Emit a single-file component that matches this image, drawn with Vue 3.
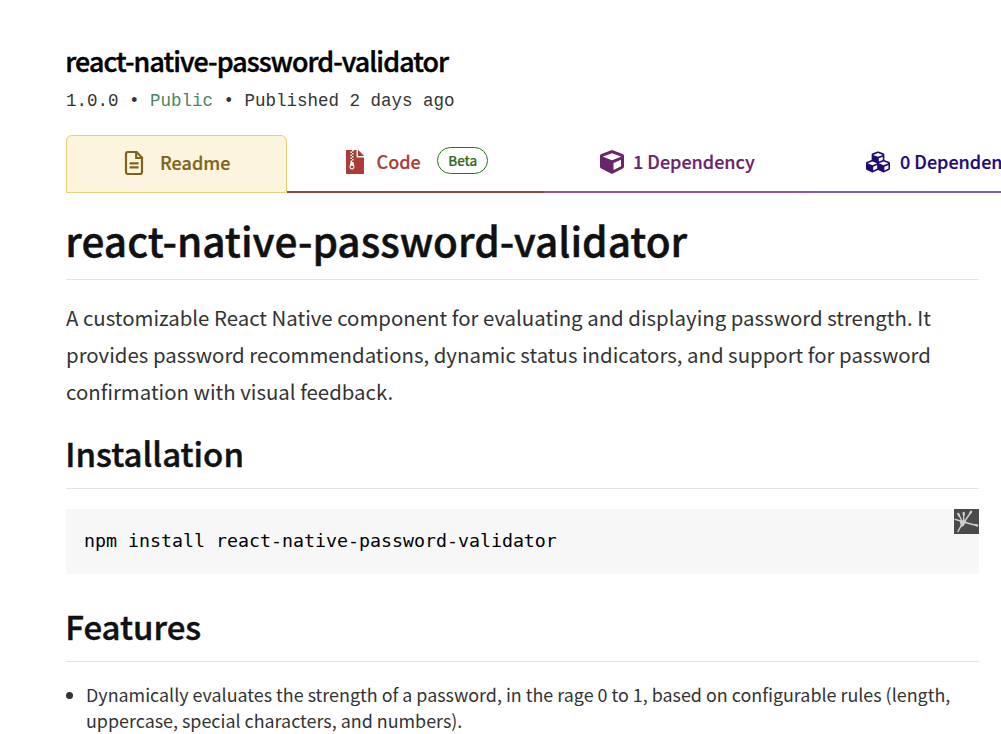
<script setup>
const features = [
  'Dynamically evaluates the strength of a password, in the rage 0 to 1, based on configurable rules (length, uppercase, special characters, and numbers).',
]
</script>

<template>
  <main class="page">
    <header>
      <h2 class="name">react-native-password-validator</h2>
      <p class="meta">1.0.0 • <span class="public">Public</span> • Published 2 days ago</p>
    </header>

    <nav class="tabs">
      <a class="tab readme">
        <svg class="doc" width="20" height="26" viewBox="0 0 20 26" fill="none" stroke="currentColor" stroke-width="2.200">
          <path d="M4 2h8.600L18 7.600V22a2 2 0 0 1-2 2H4a2 2 0 0 1-2-2V4a2 2 0 0 1 2-2z" />
          <path d="M12.200 2.400V8H17.600M5.600 13.300h9M5.600 17.400h9" />
        </svg>
        <span>Readme</span>
      </a>
      <a class="tab code">
        <svg width="18" height="24" viewBox="0 0 384 512" fill="currentColor">
          <path d="M384 121V128H256V0h6.100zM128.400 336c-17.900 0-32.400 12.100-32.400 27 0 15 14.600 27 32.500 27s32.400-12.100 32.400-27-14.600-27-32.500-27zM224 136V0h-63.600v32h-32V0H12C5 0 0 5 0 12v488c0 7 5 12 12 12h360c7 0 12-5 12-12V160H248c-13.200 0-24-10.800-24-24zM95.900 32h32v32h-32zm32.300 384c-33.200 0-58-30.400-51.400-62.900L96.400 256v-32h32v-32h-32v-32h32v-32h-32V96h32V64h32v32h-32v32h32v32h-32v32h32v32h-32v32h22.100c5.700 0 10.700 4.100 11.800 9.700l17.300 87.700c6.400 32.400-18.400 62.600-51.400 62.600z" />
        </svg>
        <span>Code</span>
        <span class="beta">Beta</span>
      </a>
      <a class="tab dependency">
        <svg width="24" height="24" viewBox="0 0 512 512" fill="currentColor">
          <path d="M239.100 6.300l-208 78c-18.700 7-31.100 25-31.100 45v225.100c0 18.200 10.300 34.800 26.500 42.900l208 104c13.500 6.800 29.400 6.800 42.900 0l208-104c16.300-8.100 26.500-24.800 26.500-42.900V129.300c0-20-12.400-37.900-31.100-44.900l-208-78C262 2.200 250 2.200 239.100 6.300zM256 68.400l192 72v1.100l-192 78-192-78v-1.100l192-72zm32 356V275.500l160-65v133.900l-160 80z" />
        </svg>
        <span>1 Dependency</span>
      </a>
      <a class="tab dependents">
        <svg width="24" height="24" viewBox="0 0 512 512" fill="currentColor">
          <path d="M488.600 250.200L392 214V105.500c0-15-9.300-28.400-23.400-33.700l-100-37.500c-8.100-3.100-17.100-3.100-25.300 0l-100 37.500c-14.100 5.300-23.400 18.700-23.400 33.700V214l-96.600 36.200C9.300 255.500 0 268.900 0 283.900V394c0 13.600 7.700 26.100 19.900 32.200l100 50c10.100 5.100 22.100 5.100 32.200 0l103.900-52 103.900 52c10.100 5.100 22.100 5.100 32.200 0l100-50c12.200-6.100 19.900-18.600 19.900-32.200V283.900c0-15-9.300-28.400-23.400-33.700zM358 214.800l-85 31.900v-68.200l85-37v73.300zM154 104.100l102-38.200 102 38.200v.6l-102 41.400-102-41.400v-.6zm84 291.100l-85 42.500v-79.100l85-38.800v75.400zm0-112l-102 41.400-102-41.400v-.6l102-38.200 102 38.200v.6zm240 112l-85 42.500v-79.100l85-38.800v75.400zm0-112l-102 41.400-102-41.400v-.6l102-38.200 102 38.200v.6z" />
        </svg>
        <span>0 Dependents</span>
      </a>
    </nav>

    <article class="content">
      <h1>react-native-password-validator</h1>
      <p class="intro">
        A customizable React Native component for evaluating and displaying password strength. It
        provides password recommendations, dynamic status indicators, and support for password
        confirmation with visual feedback.
      </p>
      <h2 class="section">Installation</h2>
      <div class="snippet">
        <code>npm install react-native-password-validator</code>
        <span class="badge">
          <svg width="25" height="25" viewBox="0 0 25 25" fill="none" stroke="#cfcfcf" stroke-linecap="round">
            <path d="M8.500 13L4.500 5.200M9.500 12.500L9.800 4M10.500 12.500L17 3M8.500 12.500L1 10.300" stroke-width="1.400" />
            <path d="M4.200 4.800l1 1.900M9.700 3.800v1.800M17.200 2.700l-1 1.500M22 16l1.200.5" stroke-width="2.200" />
            <path d="M10 13.200l13 3.300M8.500 14L4 22.500" stroke-width="1.500" />
            <path d="M5.500 11.500l7 .5-2.500 4.200-2.700 2.300z" fill="#cfcfcf" stroke="none" />
          </svg>
        </span>
      </div>
      <h2 class="section features">Features</h2>
      <ul>
        <li v-for="feature in features" :key="feature">{{ feature }}</li>
      </ul>
    </article>
  </main>
</template>

<style>
html,
body {
  margin: 0;
  background: #fff;
  overflow: hidden;
}
</style>

<style scoped>
.page {
  box-sizing: border-box;
  height: 734px;
  overflow: hidden;
  padding: 43px 22px 0 66px;
  font-family: "Noto Sans CJK SC", "Noto Sans", sans-serif;
  color: #333;
}
h1,
h2,
p,
ul {
  margin: 0;
  font-weight: 500;
}
h1,
h2 {
  text-indent: -0.7px;
  -webkit-text-stroke: 0.45px currentColor;
}
.name {
  font-size: 26.8px;
  line-height: 36px;
  letter-spacing: -0.9px;
  color: #000;
}
.meta {
  margin-top: 10px;
  font: 17.5px/24px "Liberation Mono", monospace;
  white-space: nowrap;
}
.public {
  color: #4c8569;
}
.tabs {
  display: flex;
  width: 1090px;
  height: 58px;
  margin-top: 22px;
}
.tab {
  display: flex;
  flex: none;
  align-items: center;
  box-sizing: border-box;
  height: 58px;
  font-size: 18px;
  line-height: 26px;
  font-weight: 500;
  white-space: nowrap;
  -webkit-text-stroke: 0.2px currentColor;
}
.tab svg {
  flex: none;
  -webkit-text-stroke: 0;
}
.tab span {
  margin-top: -2px;
}
.readme {
  width: 221px;
  padding: 0 0 2px 57px;
  gap: 16px;
  color: #7f6420;
  background: #fdf4dd;
  border: 1px solid #e9cf76;
  border-radius: 6px 6px 0 0;
}
.code,
.dependency,
.dependents {
  padding-bottom: 2px;
  border-bottom: 2px solid;
}
.code {
  width: 257px;
  padding-left: 59px;
  gap: 12.5px;
  color: #ab3d36;
  border-color: #8e4841;
}
.dependency {
  width: 268px;
  padding-left: 56px;
  gap: 9px;
  color: #69256b;
  border-color: #9b519c;
}
.dependents {
  width: 344px;
  padding-left: 54px;
  gap: 10px;
  color: #21087a;
  border-color: #815fba;
}
.tab .beta {
  box-sizing: border-box;
  width: 51px;
  height: 27px;
  margin: -4px 0 0 4px;
  border: 1px solid #2d6d22;
  border-radius: 14px;
  color: #2d6d22;
  font-size: 13.4px;
  line-height: 25px;
  text-align: center;
}
h1 {
  margin-top: 21px;
  padding-bottom: 13px;
  border-bottom: 1px solid #e3e4e4;
  font-size: 40.6px;
  line-height: 52px;
  color: #111;
}
.intro {
  margin-top: 19px;
  font-size: 20.4px;
  line-height: 37px;
  font-weight: 400;
}
.section {
  margin-top: 21px;
  padding-bottom: 13px;
  border-bottom: 1px solid #e3e4e4;
  font-size: 33px;
  line-height: 44px;
  color: #111;
}
.features {
  margin-top: 30px;
}
.snippet {
  position: relative;
  display: flex;
  align-items: center;
  box-sizing: border-box;
  height: 65px;
  margin-top: 20px;
  padding: 0 0 2px 18px;
  background: #f7f7f7;
  border-radius: 2px;
}
.snippet code {
  font: 18.27px/26px "DejaVu Sans Mono", monospace;
  color: #000;
}
.badge {
  position: absolute;
  top: 0;
  right: 0;
  width: 25px;
  height: 25px;
  background: #4a4a4a;
}
.badge svg {
  display: block;
}
ul {
  margin-top: 19px;
  padding: 0;
  list-style: none;
}
li {
  display: flex;
  gap: 12px;
  font-size: 17.9px;
  line-height: 26px;
  font-weight: 400;
}
li::before {
  content: "";
  flex: none;
  width: 7px;
  height: 7px;
  margin: 11px 1px 0 0;
  border-radius: 50%;
  background: #333;
}
</style>
